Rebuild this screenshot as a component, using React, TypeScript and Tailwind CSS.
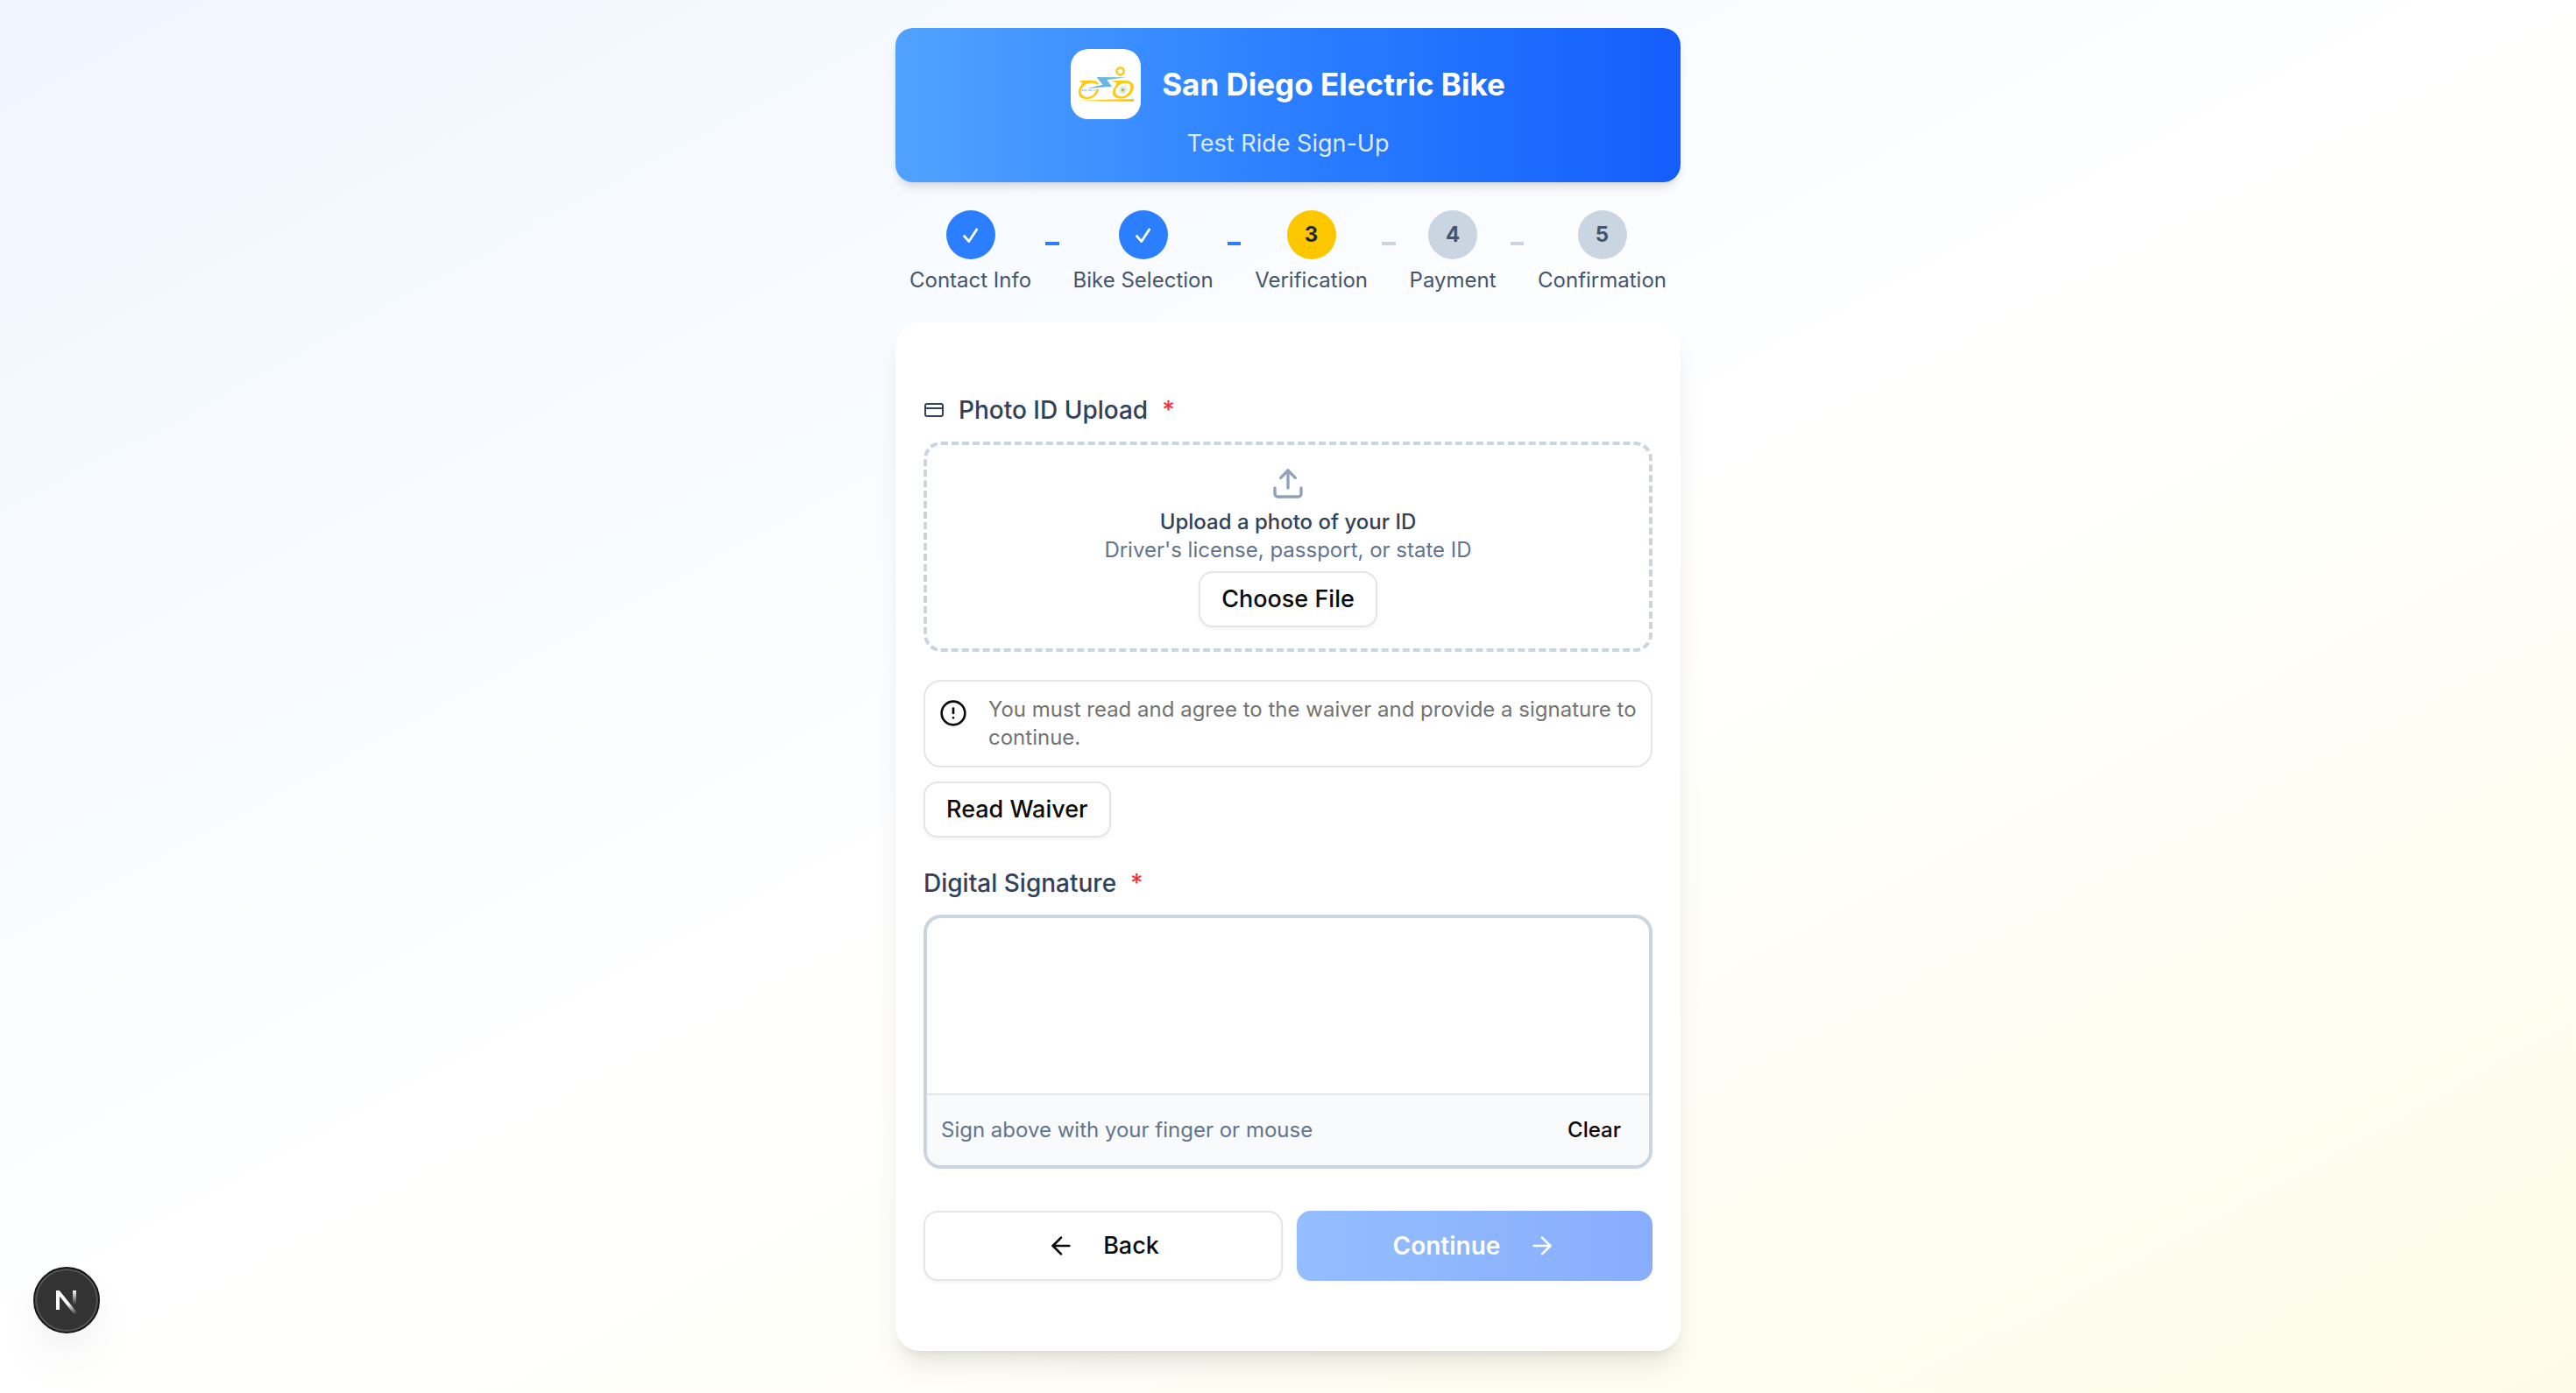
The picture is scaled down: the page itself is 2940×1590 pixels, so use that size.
import { useRef } from "react";
import { ArrowLeft, ArrowRight, CircleAlert, CreditCard, Upload } from "lucide-react";

type StepState = "done" | "current" | "todo";

const steps: { label: string; state: StepState }[] = [
  { label: "Contact Info", state: "done" },
  { label: "Bike Selection", state: "done" },
  { label: "Verification", state: "current" },
  { label: "Payment", state: "todo" },
  { label: "Confirmation", state: "todo" },
];

const circleStyle: Record<StepState, string> = {
  done: "bg-[#2b7fff] text-white",
  current: "bg-[#fdc700] text-[#1d293d]",
  todo: "bg-[#cad5e2] text-[#45556c]",
};

const outlineButton =
  "flex items-center justify-center rounded-[16px] border-2 border-[#e5e5e5] bg-white text-[27px] font-medium leading-10 text-[#0a0a0a] shadow-[0_2px_4px_rgba(0,0,0,0.05)]";

function TickIcon() {
  return (
    <svg viewBox="0 0 24 24" className="size-6" role="img" aria-label="Completed">
      <path
        d="M4.5 13.5L9.8 19.6L18.7 6"
        fill="none"
        stroke="currentColor"
        strokeWidth="2.8"
        strokeLinecap="round"
        strokeLinejoin="round"
      />
    </svg>
  );
}

function BikeLogo() {
  return (
    <svg viewBox="0 0 240 240" className="size-20" role="img" aria-label="San Diego Electric Bike logo">
      <defs>
        <linearGradient id="road" x1="0" x2="1" y1="0" y2="0">
          <stop offset="0" stopColor="#fdd020" stopOpacity="0.15" />
          <stop offset="0.4" stopColor="#fdca14" />
          <stop offset="1" stopColor="#fdc708" />
        </linearGradient>
      </defs>
      <circle cx="170" cy="76" r="12" fill="none" stroke="#fcc816" strokeWidth="8" />
      <circle cx="170" cy="76" r="9" fill="none" stroke="#fff" strokeWidth="3" strokeDasharray="3 6.42" />
      <path
        d="M26 108H76Q92 108 97 120L90 122Q86 116 72 116Q54 116 43 128Q31 143 38 155Q46 166 62 164Q82 160 88 138L97 135Q93 162 66 170Q39 175 29 160Q21 141 40 117Q36 110 26 108Z"
        fill="#fdca14"
      />
      <path
        fillRule="evenodd"
        d="M139 108H188Q216 109 216 132Q211 160 183 169Q155 174 145 157Q140 139 158 119Q151 110 139 108ZM167 123Q149 138 154 152Q161 165 182 161Q201 154 205 132Q205 116 187 116Q175 116 167 123Z"
        fill="#fdca14"
      />
      <path d="M89 96L189 97L124 105L141 128L54 135L109 122Z" fill="#6bb5e0" />
      <path d="M39 141H85" stroke="#76b9dd" strokeWidth="4" strokeDasharray="3 2 5 2 3 5" />
      <circle cx="179" cy="140" r="10" fill="none" stroke="#9ed0d4" strokeWidth="7" strokeDasharray="2 3.2" />
      <circle cx="179" cy="140" r="6" fill="#b9b545" />
      <path d="M26 175L216 171V180L26 177Z" fill="url(#road)" />
    </svg>
  );
}

function DevBadge() {
  return (
    <button
      type="button"
      aria-label="Open developer tools"
      className="fixed bottom-[68px] left-[38px] size-[76px] rounded-full border-2 border-[#161616] bg-[#333] shadow-[inset_0_0_0_2px_#555,0_16px_32px_rgba(0,0,0,0.03),0_32px_64px_rgba(0,0,0,0.04)]"
    >
      <svg viewBox="2 2 72 72" className="size-full" aria-hidden="true">
        <defs>
          <linearGradient id="slant" gradientUnits="userSpaceOnUse" x1="40" y1="42" x2="49" y2="54">
            <stop offset="0" stopColor="#fff" />
            <stop offset="1" stopColor="#fff" stopOpacity="0" />
          </linearGradient>
          <linearGradient id="stem" gradientUnits="userSpaceOnUse" x1="47" y1="27" x2="47" y2="43">
            <stop offset="0" stopColor="#fff" />
            <stop offset="1" stopColor="#fff" stopOpacity="0" />
          </linearGradient>
        </defs>
        <rect x="26" y="27" width="4" height="22" fill="#fff" />
        <rect x="45" y="27" width="4" height="16" fill="url(#stem)" />
        <line x1="28" y1="28" x2="49" y2="54" stroke="url(#slant)" strokeWidth="4" />
      </svg>
    </button>
  );
}

function Required() {
  return <span className="text-[#fb2c36]">*</span>;
}

export default function App() {
  const fileInput = useRef<HTMLInputElement>(null);
  const canvas = useRef<HTMLCanvasElement>(null);

  return (
    <div className="min-h-screen bg-linear-to-br from-[#eff6ff] via-white to-[#fefce8] px-8 py-8 font-['Inter',sans-serif]">
      <main className="mx-auto flex max-w-4xl flex-col gap-8">
        <header className="flex flex-col items-center gap-2 rounded-[20px] bg-linear-to-r from-[#51a2ff] via-[#2b7fff] to-[#155dfc] p-6 shadow-[0_8px_12px_-2px_rgba(0,0,0,0.1),0_4px_8px_-4px_rgba(0,0,0,0.1)]">
          <div className="flex items-center gap-6">
            <div className="rounded-[20px] bg-white">
              <BikeLogo />
            </div>
            <h1 className="text-[35px] font-bold leading-[56px] text-white">San Diego Electric Bike</h1>
          </div>
          <p className="text-[27px] leading-10 text-[#dbeafe]">Test Ride Sign-Up</p>
        </header>

        <ol className="flex items-center px-4">
          {steps.map((step, i) => (
            <li key={step.label} className={i < steps.length - 1 ? "flex flex-auto items-center" : "flex items-center"}>
              <div className="flex flex-col items-center gap-2">
                <span
                  className={`flex size-14 items-center justify-center rounded-full text-[24px] font-bold leading-8 ${circleStyle[step.state]}`}
                >
                  {step.state === "done" ? <TickIcon /> : i + 1}
                </span>
                <span className="whitespace-nowrap text-[24px] leading-8 text-[#45556c]">{step.label}</span>
              </div>
              {i < steps.length - 1 && (
                <span
                  className={`mx-4 mb-5 h-1 flex-1 ${step.state === "done" ? "bg-[#2b7fff]" : "bg-[#cad5e2]"}`}
                />
              )}
            </li>
          ))}
        </ol>

        <form
          onSubmit={(e) => e.preventDefault()}
          className="flex flex-col gap-8 rounded-[28px] bg-white/95 px-8 py-20 shadow-[0_20px_30px_-6px_rgba(0,0,0,0.1),0_8px_12px_-8px_rgba(0,0,0,0.1)]"
        >
          <section className="flex flex-col gap-4">
            <label htmlFor="photo-id" className="flex items-center gap-4 text-[28px] font-medium leading-10 text-[#314158]">
              <CreditCard className="size-6" aria-hidden="true" />
              Photo ID Upload
              <Required />
            </label>
            <div className="flex flex-col items-center gap-2 rounded-[20px] border-4 border-dashed border-[#cad5e2] p-6">
              <Upload className="size-10 text-[#90a1b9]" aria-hidden="true" />
              <div className="text-center text-[24px] leading-8">
                <p className="font-medium text-[#314158]">Upload a photo of your ID</p>
                <p className="text-[#62748e]">Driver's license, passport, or state ID</p>
              </div>
              <input ref={fileInput} id="photo-id" type="file" accept="image/*" className="hidden" />
              <button type="button" onClick={() => fileInput.current?.click()} className={`${outlineButton} h-16 px-6`}>
                Choose File
              </button>
            </div>
          </section>

          <section className="flex flex-col items-start gap-4">
            <div role="alert" className="flex w-full items-start gap-6 rounded-[20px] border-2 border-[#e5e5e5] bg-white p-4">
              <CircleAlert className="mt-1 size-8 shrink-0 text-[#0a0a0a]" aria-hidden="true" />
              <p className="text-[24px] leading-8 text-[#737373]">
                You must read and agree to the waiver and provide a signature to continue.
              </p>
            </div>
            <button type="button" className={`${outlineButton} h-16 px-6`}>
              Read Waiver
            </button>
          </section>

          <section className="flex flex-col gap-4">
            <label htmlFor="signature" className="flex items-center gap-4 text-[28px] font-medium leading-10 text-[#314158]">
              Digital Signature
              <Required />
            </label>
            <div className="overflow-hidden rounded-[20px] border-4 border-[#cad5e2] bg-white">
              <canvas ref={canvas} id="signature" className="block h-50 w-full" />
              <div className="flex items-center justify-between border-t-2 border-[#e5e5e5] bg-[#f8fafc] p-4 text-[24px] leading-8">
                <p className="text-[#62748e]">Sign above with your finger or mouse</p>
                <button
                  type="button"
                  onClick={() => {
                    const c = canvas.current;
                    c?.getContext("2d")?.clearRect(0, 0, c.width, c.height);
                  }}
                  className="h-12 px-4 font-medium text-[#0a0a0a]"
                >
                  Clear
                </button>
              </div>
            </div>
          </section>

          <div className="mt-4 flex gap-4">
            <button type="button" className={`${outlineButton} h-20 flex-1 gap-8`}>
              <ArrowLeft className="size-8" aria-hidden="true" />
              Back
            </button>
            <button
              type="submit"
              disabled
              className="flex h-20 flex-1 items-center justify-center gap-8 rounded-[16px] bg-linear-to-r from-[#2b7fff] to-[#155dfc] text-[28px] font-semibold leading-10 text-white opacity-50 shadow-[0_2px_4px_rgba(0,0,0,0.05)]"
            >
              Continue
              <ArrowRight className="size-8" aria-hidden="true" />
            </button>
          </div>
        </form>
      </main>
      <DevBadge />
    </div>
  );
}
